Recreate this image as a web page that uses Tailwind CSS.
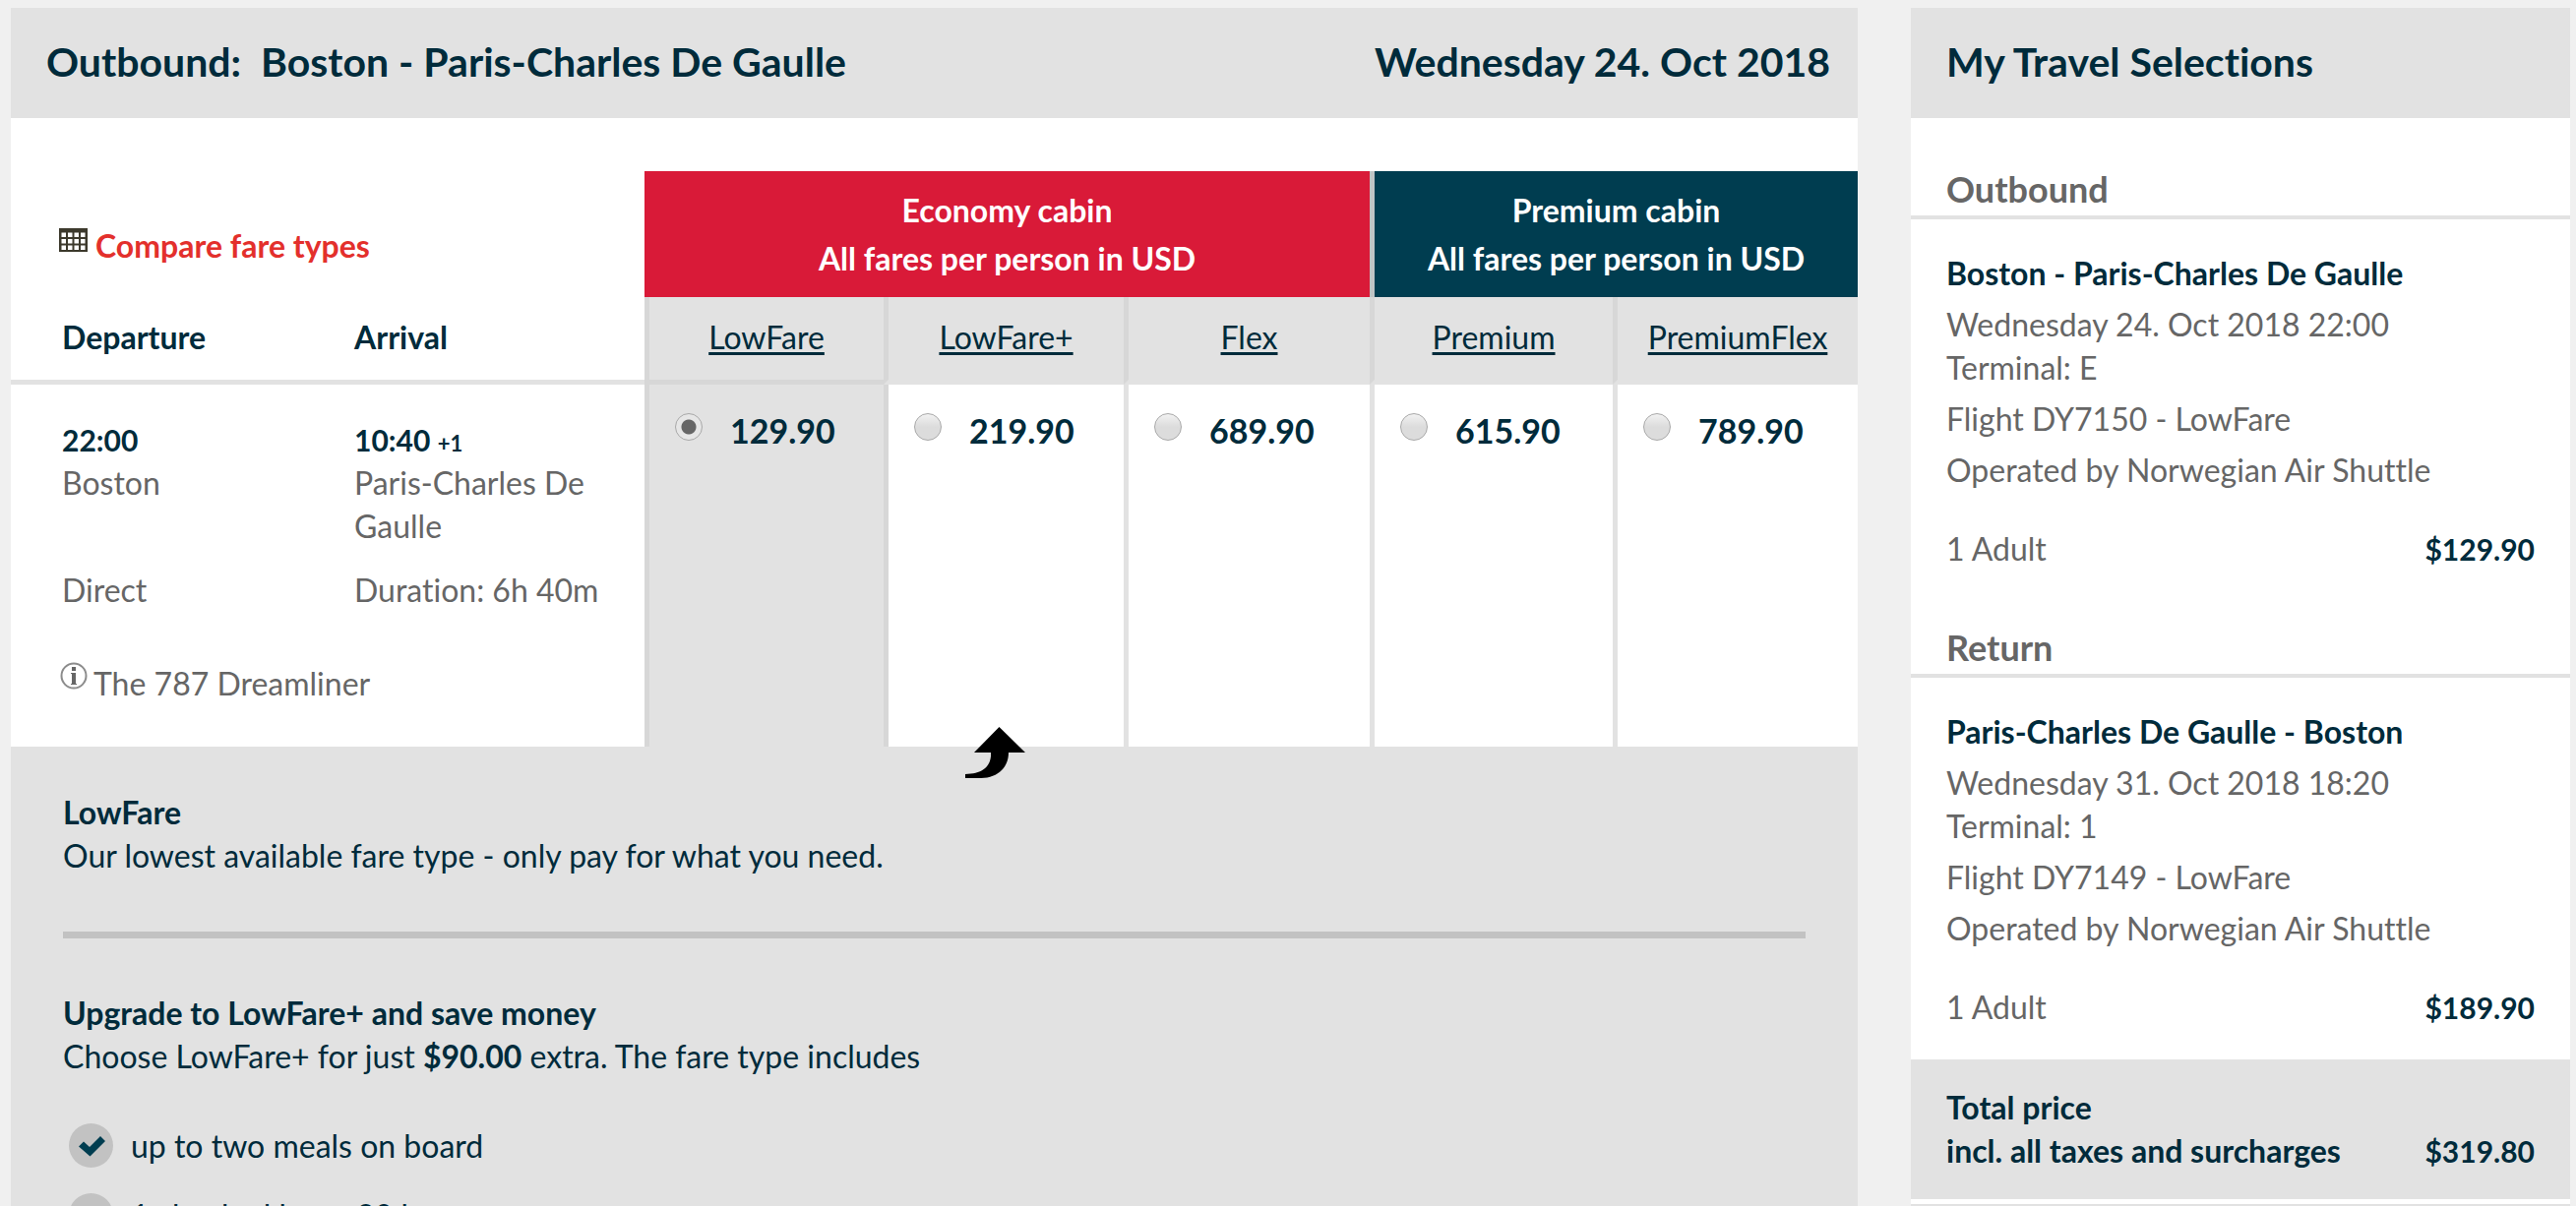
<!DOCTYPE html>
<html lang="en">
<head>
  <meta charset="UTF-8">
  <meta name="viewport" content="width=device-width, initial-scale=1.0">
  <title>Select flight</title>
  <script src="https://cdn.jsdelivr.net/npm/@tailwindcss/browser@4"></script>
</head>
<body class="bg-[#f0f0f0] font-['Lato',sans-serif] text-[32px] leading-[44px] text-[#002b3b] [font-variant-ligatures:none]">

  <div class="flex h-screen gap-[54px] overflow-hidden pt-2 pr-1.5 pl-[11px]">

    <!-- Flight selection -->
    <main class="min-w-0 flex-1 bg-white">
      <header class="flex h-28 items-center justify-between bg-[#e2e2e2] pr-7 pb-0.5 pl-9 text-[41px] font-bold">
        <h1 class="whitespace-pre">Outbound:  Boston - Paris-Charles De Gaulle</h1>
        <p>Wednesday 24. Oct 2018</p>
      </header>

      <table class="mt-[54px] w-full table-fixed border-separate border-spacing-0">
        <colgroup>
          <col class="w-[297px]">
          <col class="w-[347px]">
          <col class="w-[243px]">
          <col class="w-[244px]">
          <col class="w-[250px]">
          <col class="w-[247px]">
          <col class="w-[249px]">
        </colgroup>
        <thead>
          <tr class="h-32">
            <td colspan="2" class="pt-6 pl-[49px]">
              <a href="#" class="flex gap-2 font-bold text-[#e3302c]">
                <svg class="mt-1 h-6 w-[29px]" viewBox="0 0 29 24" fill="#fff">
                  <rect width="29" height="24" fill="#3c392c"/>
                  <path d="M2.500 4.500h4.500v4.500H2.500zM9 4.500h4.500v4.500H9zM15.500 4.500H20v4.500h-4.500zM22 4.500h4.500v4.500H22zM2.500 11h4.500v4.500H2.500zM9 11h4.500v4.500H9zM15.500 11H20v4.500h-4.500zM22 11h4.500v4.500H22zM2.500 17.500h4.500V22H2.500zM9 17.500h4.500V22H9zM15.500 17.500H20V22h-4.500zM22 17.500h4.500V22H22z"/>
                </svg>
                Compare fare types
              </a>
            </td>
            <th colspan="3" scope="colgroup" class="bg-[#d91a38] font-bold leading-[49px] text-white">Economy cabin<br>All fares per person in USD</th>
            <th colspan="2" scope="colgroup" class="border-l-5 border-[#c0c4c5] bg-[#003d50] font-bold leading-[49px] text-white">Premium cabin<br>All fares per person in USD</th>
          </tr>
          <tr class="h-[89px]">
            <th scope="col" class="border-b-5 border-[#e2e2e2] pb-0.5 pl-[52px] text-left font-bold">Departure</th>
            <th scope="col" class="border-b-5 border-[#e2e2e2] pb-0.5 pl-[52px] text-left font-bold">Arrival</th>
            <th scope="col" class="border-b-5 border-l-5 border-[#d7d7d7] bg-[#e2e2e2] pb-0.5 font-normal"><a href="#" class="underline decoration-3 underline-offset-3">LowFare</a></th>
            <th scope="col" class="border-b-5 border-l-5 border-b-[#e2e2e2] border-l-[#d7d7d7] bg-[#e2e2e2] pb-0.5 font-normal"><a href="#" class="underline decoration-3 underline-offset-3">LowFare+</a></th>
            <th scope="col" class="border-b-5 border-l-5 border-b-[#e2e2e2] border-l-[#d7d7d7] bg-[#e2e2e2] pb-0.5 font-normal"><a href="#" class="underline decoration-3 underline-offset-3">Flex</a></th>
            <th scope="col" class="border-b-5 border-l-5 border-b-[#e2e2e2] border-l-[#d7d7d7] bg-[#e2e2e2] pb-0.5 font-normal"><a href="#" class="underline decoration-3 underline-offset-3">Premium</a></th>
            <th scope="col" class="border-b-5 border-l-5 border-b-[#e2e2e2] border-l-[#d7d7d7] bg-[#e2e2e2] pb-0.5 font-normal"><a href="#" class="underline decoration-3 underline-offset-3">PremiumFlex</a></th>
          </tr>
        </thead>
        <tbody>
          <tr class="h-[368px] align-top">
            <td colspan="2" class="pt-[34px] text-[#666]">
              <div class="grid grid-cols-[297fr_347fr] gap-y-[21px]">
                <p class="pl-[52px]"><b class="text-[30px] text-[#002b3b]">22:00</b><br>Boston</p>
                <p class="pr-8 pl-[52px]"><b class="text-[30px] text-[#002b3b]">10:40 <span class="text-[22px] leading-none">+1</span></b><br>Paris-Charles De Gaulle</p>
                <p class="pl-[52px]">Direct</p>
                <p class="pl-[52px] whitespace-nowrap">Duration: 6h 40m</p>
              </div>
              <p class="mt-[51px] flex gap-1.5 pl-[50px]">
                <svg class="h-7 w-7" viewBox="0 0 28 28" fill="none">
                  <circle cx="14" cy="14" r="12.500" stroke="#8c8c8c" stroke-width="2"/>
                  <path d="M12 5h4v4h-4zM11 11h5v11h1v1h-6v-1h1V12h-1z" fill="#666"/>
                </svg>
                The 787 Dreamliner
              </p>
            </td>
            <td class="border-l-5 border-[#d7d7d7] bg-[#e2e2e2] pt-[25px] pl-[26px]">
              <label class="flex gap-7 text-[34px] font-bold">
                <input type="radio" name="fare" checked class="mt-1 h-7 w-7 shrink-0 appearance-none rounded-full border border-[#a8a8a8] bg-linear-to-b from-[#f2f2f2] to-[#dcdcdc] checked:bg-[radial-gradient(circle,#666_7px,#e6e6e6_8px)]">
                129.90
              </label>
            </td>
            <td class="border-l-5 border-[#d7d7d7] pt-[25px] pl-[26px]">
              <label class="flex gap-7 text-[34px] font-bold">
                <input type="radio" name="fare" class="mt-1 h-7 w-7 shrink-0 appearance-none rounded-full border border-[#a8a8a8] bg-linear-to-b from-[#f2f2f2] to-[#dcdcdc] to-50% checked:bg-[radial-gradient(circle,#666_7px,#e6e6e6_8px)]">
                219.90
              </label>
            </td>
            <td class="border-l-5 border-[#e2e2e2] pt-[25px] pl-[26px]">
              <label class="flex gap-7 text-[34px] font-bold">
                <input type="radio" name="fare" class="mt-1 h-7 w-7 shrink-0 appearance-none rounded-full border border-[#a8a8a8] bg-linear-to-b from-[#f2f2f2] to-[#dcdcdc] to-50% checked:bg-[radial-gradient(circle,#666_7px,#e6e6e6_8px)]">
                689.90
              </label>
            </td>
            <td class="border-l-5 border-[#e2e2e2] pt-[25px] pl-[26px]">
              <label class="flex gap-7 text-[34px] font-bold">
                <input type="radio" name="fare" class="mt-1 h-7 w-7 shrink-0 appearance-none rounded-full border border-[#a8a8a8] bg-linear-to-b from-[#f2f2f2] to-[#dcdcdc] to-50% checked:bg-[radial-gradient(circle,#666_7px,#e6e6e6_8px)]">
                615.90
              </label>
            </td>
            <td class="border-l-5 border-[#e2e2e2] pt-[25px] pl-[26px]">
              <label class="flex gap-7 text-[34px] font-bold">
                <input type="radio" name="fare" class="mt-1 h-7 w-7 shrink-0 appearance-none rounded-full border border-[#a8a8a8] bg-linear-to-b from-[#f2f2f2] to-[#dcdcdc] to-50% checked:bg-[radial-gradient(circle,#666_7px,#e6e6e6_8px)]">
                789.90
              </label>
            </td>
          </tr>
        </tbody>
      </table>

      <!-- Fare details -->
      <section class="relative h-full bg-[#e2e2e2] px-[53px] pt-[45px]">
        <svg class="absolute -top-5 left-[970px] h-[52px] w-[61px]" viewBox="0 0 61 52">
          <path d="M34.500 0 61 26H44C44 41 33 52 16 52H0v-4C16 48 27 41 26 26H9z"/>
        </svg>
        <h2 class="font-bold">LowFare</h2>
        <p>Our lowest available fare type - only pay for what you need.</p>
        <hr class="mt-[55px] mb-[54px] border-t-7 border-[#c2c2c2]">
        <h2 class="font-bold">Upgrade to LowFare+ and save money</h2>
        <p>Choose LowFare+ for just <b>$90.00</b> extra. The fare type includes</p>
        <ul class="mt-[46px] flex flex-col gap-[26px] pl-1.5">
          <li class="flex items-center gap-[18px]">
            <svg class="h-[45px] w-[45px]" viewBox="0 0 45 45">
              <circle cx="22.500" cy="22.500" r="22.500" fill="#c2c2c2"/>
              <path d="M10 23.500 15 18.500 21 24 32 13 37 18 21.500 33.500z" fill="#003d50"/>
            </svg>
            up to two meals on board
          </li>
          <li class="flex items-center gap-[18px]">
            <svg class="h-[45px] w-[45px]" viewBox="0 0 45 45">
              <circle cx="22.500" cy="22.500" r="22.500" fill="#c2c2c2"/>
              <path d="M10 23.500 15 18.500 21 24 32 13 37 18 21.500 33.500z" fill="#003d50"/>
            </svg>
            1 checked bag - 20 kg
          </li>
        </ul>
      </section>
    </main>

    <!-- Travel selections -->
    <aside class="w-[670px] shrink-0 bg-white text-[#666]">
      <h2 class="flex h-28 items-center bg-[#e2e2e2] px-9 pb-0.5 text-[41px] font-bold text-[#002b3b]">My Travel Selections</h2>

      <section>
        <h3 class="border-b-4 border-[#e2e2e2] px-9 pt-[50px] pb-[5px] text-4xl leading-[44px] font-bold">Outbound</h3>
        <div class="px-9 pt-[33px] pb-1.5">
          <h4 class="font-bold text-[#002b3b]">Boston - Paris-Charles De Gaulle</h4>
          <p class="mt-2">Wednesday 24. Oct 2018 22:00<br>Terminal: E</p>
          <p class="mt-2">Flight DY7150 - LowFare</p>
          <p class="mt-2">Operated by Norwegian Air Shuttle</p>
          <p class="mt-9 flex justify-between">1 Adult <b class="text-[30px] text-[#002b3b]">$129.90</b></p>
        </div>
      </section>

      <section>
        <h3 class="border-b-4 border-[#e2e2e2] px-9 pt-[50px] pb-[5px] text-4xl leading-[44px] font-bold">Return</h3>
        <div class="px-9 pt-[33px] pb-[31px]">
          <h4 class="font-bold text-[#002b3b]">Paris-Charles De Gaulle - Boston</h4>
          <p class="mt-2">Wednesday 31. Oct 2018 18:20<br>Terminal: 1</p>
          <p class="mt-2">Flight DY7149 - LowFare</p>
          <p class="mt-2">Operated by Norwegian Air Shuttle</p>
          <p class="mt-9 flex justify-between">1 Adult <b class="text-[30px] text-[#002b3b]">$189.90</b></p>
        </div>
      </section>

      <div class="flex items-end justify-between border-b-5 border-white bg-[#e2e2e2] px-9 py-[27px] font-bold text-[#002b3b]">
        <p>Total price<br>incl. all taxes and surcharges</p>
        <p class="text-[30px]">$319.80</p>
      </div>
      <div class="h-full bg-[#e2e2e2]"></div>
    </aside>

  </div>

</body>
</html>
